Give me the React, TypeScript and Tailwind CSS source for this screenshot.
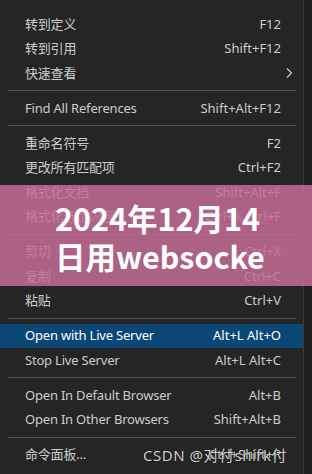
import React from "react";

type Item =
  | { kind: "item"; label: string; shortcut?: string; submenu?: boolean; active?: boolean }
  | { kind: "sep" };

const items: Item[] = [
  { kind: "item", label: "转到定义", shortcut: "F12" },
  { kind: "item", label: "转到引用", shortcut: "Shift+F12" },
  { kind: "item", label: "快速查看", submenu: true },
  { kind: "sep" },
  { kind: "item", label: "Find All References", shortcut: "Shift+Alt+F12" },
  { kind: "sep" },
  { kind: "item", label: "重命名符号", shortcut: "F2" },
  { kind: "item", label: "更改所有匹配项", shortcut: "Ctrl+F2" },
  { kind: "item", label: "格式化文档", shortcut: "Shift+Alt+F" },
  { kind: "item", label: "格式化选定内容", shortcut: "Ctrl+K Ctrl+F" },
  { kind: "sep" },
  { kind: "item", label: "剪切", shortcut: "Ctrl+X" },
  { kind: "item", label: "复制", shortcut: "Ctrl+C" },
  { kind: "item", label: "粘贴", shortcut: "Ctrl+V" },
  { kind: "sep" },
  { kind: "item", label: "Open with Live Server", shortcut: "Alt+L Alt+O", active: true },
  { kind: "item", label: "Stop Live Server", shortcut: "Alt+L Alt+C" },
  { kind: "sep" },
  { kind: "item", label: "Open In Default Browser", shortcut: "Alt+B" },
  { kind: "item", label: "Open In Other Browsers", shortcut: "Shift+Alt+B" },
  { kind: "sep" },
  { kind: "item", label: "命令面板...", shortcut: "Ctrl+Shift+P" },
];

export default function App() {
  return (
    <div
      className="relative w-[312px] h-[474px] overflow-hidden bg-[#1f1f20]"
      style={{ fontFamily: '"Noto Sans", "Noto Sans CJK SC", sans-serif' }}
    >
      {/* ── Context menu ── */}
      <div className="w-[304px] h-full bg-[#252526] border-r border-[#3a3a3b] pt-[12px] text-[13px] text-[#cccccc]">
        {items.map((it, i) =>
          it.kind === "sep" ? (
            <div key={i} className="h-[10.5px] flex items-center pl-[8px] pr-[7px]">
              <div className="h-px w-full bg-[#555556]" />
            </div>
          ) : (
            <div
              key={i}
              className={
                "h-[24.5px] flex items-center justify-between pl-[25px] pr-[22px] leading-none " +
                (it.active ? "bg-[#0a4775] text-white" : "")
              }
            >
              <span className="tracking-[-0.2px]">{it.label}</span>
              {it.submenu ? (
                <svg width="8" height="12" viewBox="0 0 8 12" className="-mr-[12px]">
                  <path d="M2 1.5 L6.5 6 L2 10.5" fill="none" stroke="#cccccc" strokeWidth="1.2" />
                </svg>
              ) : (
                <span>{it.shortcut}</span>
              )}
            </div>
          )
        )}
      </div>

      {/* ── Title overlay ── */}
      <div className="absolute left-0 right-0 top-[185px] h-[101px] bg-[#c46c96]/85" />
      <div
        className="absolute left-[55px] top-[199px] w-[209px] overflow-hidden whitespace-nowrap text-[30.5px] leading-[38px] font-bold text-white"
        style={{ fontFamily: '"Noto Sans CJK SC", "Noto Sans", sans-serif' }}
      >
        <div>2024年12月14</div>
        <div>日用websocket</div>
      </div>

      {/* ── Watermark ── */}
      <div className="absolute left-[143px] top-[444px] text-[15px] leading-[22px] text-[#d0d0d0] tracking-[0.5px] [text-shadow:0_0_1px_#000]">
        CSDN @对付shirk付
      </div>
    </div>
  );
}
